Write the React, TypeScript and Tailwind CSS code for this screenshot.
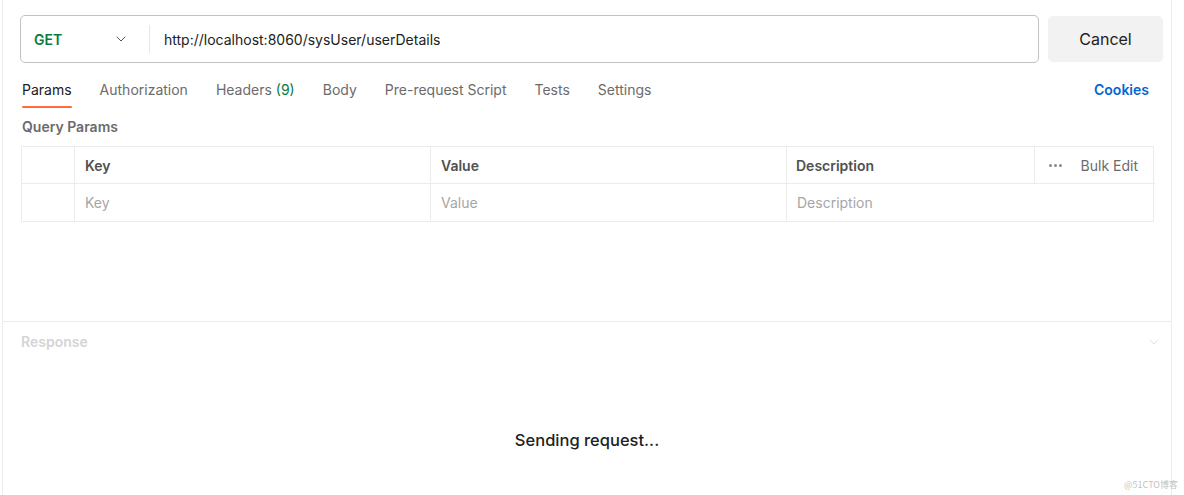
import { ChevronDown } from "lucide-react";

const tabs = [
  { label: "Params", active: true },
  { label: "Authorization" },
  { label: "Headers", count: "(9)" },
  { label: "Body" },
  { label: "Pre-request Script" },
  { label: "Tests" },
  { label: "Settings" },
];

const UrlBar = () => {
  return (
    <div className="flex items-start gap-[9px] pl-[17px] pr-[7px] pt-[15px]">
      <div className="flex h-[48px] w-[1019px] items-center rounded-[5px] border border-[#c2c2c2]">
        <div className="flex w-[128px] items-center justify-between pl-[13px] pr-[20px]">
          <span className="text-[14px] font-semibold text-[#0b7a3a]">GET</span>
          <ChevronDown size={16} strokeWidth={1.5} className="text-[#555]" />
        </div>
        <div className="h-[28px] w-px bg-[#e6e6e6]" />
        <span className="pl-[14px] text-[14px] text-[#212121]">
          http://localhost:8060/sysUser/userDetails
        </span>
      </div>
      <button className="mt-px flex h-[46px] w-[115px] items-center justify-center rounded-[5px] bg-[#f2f2f2] text-[16px] text-[#212121]">
        Cancel
      </button>
    </div>
  );
};

const Tabs = () => {
  return (
    <div className="mt-[17px] flex items-start justify-between pl-[19px] pr-[22px]">
      <div className="flex gap-[28px]">
        {tabs.map((t) => (
          <div key={t.label} className="flex flex-col">
            <span
              className={`text-[14px] leading-[20px] ${t.active ? "text-[#212121]" : "text-[#6b6b6b]"}`}
            >
              {t.label}
              {t.count && <span className="text-[#0b7a3a]"> {t.count}</span>}
            </span>
            <div
              className={`mt-[6px] h-[2px] rounded-full ${t.active ? "bg-[#ff6c37]" : "bg-transparent"}`}
            />
          </div>
        ))}
      </div>
      <span className="text-[14px] font-semibold leading-[20px] text-[#0265d2]">Cookies</span>
    </div>
  );
};

const ParamsTable = () => {
  const cell = "border-[#ebebeb] flex items-center text-[14px]";
  return (
    <div className="ml-[18px] mt-[10px] grid w-[1133px] grid-cols-[53px_356px_356px_248px_120px] border border-[#ebebeb]">
      <div className={`${cell} h-[37px] border-r border-b`} />
      <div className={`${cell} h-[37px] border-r border-b pl-[10px] font-semibold text-[#505050]`}>Key</div>
      <div className={`${cell} h-[37px] border-r border-b pl-[10px] font-semibold text-[#505050]`}>Value</div>
      <div className={`${cell} h-[37px] border-r border-b pl-[9px] font-semibold text-[#505050]`}>Description</div>
      <div className={`${cell} h-[37px] border-b justify-between pl-[14px] pr-[17px] text-[#6b6b6b]`}>
        <span className="flex gap-[2px]">
          <span className="h-[3px] w-[3px] rounded-full bg-[#8a8a8a]" />
          <span className="h-[3px] w-[3px] rounded-full bg-[#8a8a8a]" />
          <span className="h-[3px] w-[3px] rounded-full bg-[#8a8a8a]" />
        </span>
        <span>Bulk Edit</span>
      </div>
      <div className={`${cell} h-[37px] border-r`} />
      <div className={`${cell} h-[36px] border-r pl-[10px] text-[#a6a6a6]`}>Key</div>
      <div className={`${cell} h-[36px] border-r pl-[10px] text-[#a6a6a6]`}>Value</div>
      <div className={`${cell} col-span-2 h-[36px] pl-[10px] text-[#a6a6a6]`}>Description</div>
    </div>
  );
};

export default function App() {
  return (
    <div className="relative flex h-[495px] w-[1184px] bg-white font-['Inter',sans-serif]">
      <div className="w-[2px]" />
      <div className="flex w-[1170px] flex-col border-x border-[#ececec]">
        <div className="h-[322px] border-b border-[#ebebeb]">
          <UrlBar />
          <Tabs />
          <div className="mt-[10px] pl-[19px] text-[14px] font-semibold leading-[18px] text-[#6b6b6b]">
            Query Params
          </div>
          <ParamsTable />
        </div>
        <div className="flex flex-1 flex-col">
          <div className="flex items-center justify-between pl-[18px] pr-[9px] pt-[10px]">
            <span className="text-[14px] font-semibold leading-[20px] text-[#d4d4d4]">Response</span>
            <ChevronDown size={16} strokeWidth={1.25} className="text-[#dadada]" />
          </div>
          <div className="mt-[76px] text-center text-[16.5px] font-medium text-[#212121]">
            Sending request...
          </div>
        </div>
      </div>
      <span className="absolute bottom-[4px] right-[6px] font-['Noto_Sans_CJK_SC',sans-serif] text-[9px] text-[#c2c2c2]">
        @51CTO博客
      </span>
    </div>
  );
}
